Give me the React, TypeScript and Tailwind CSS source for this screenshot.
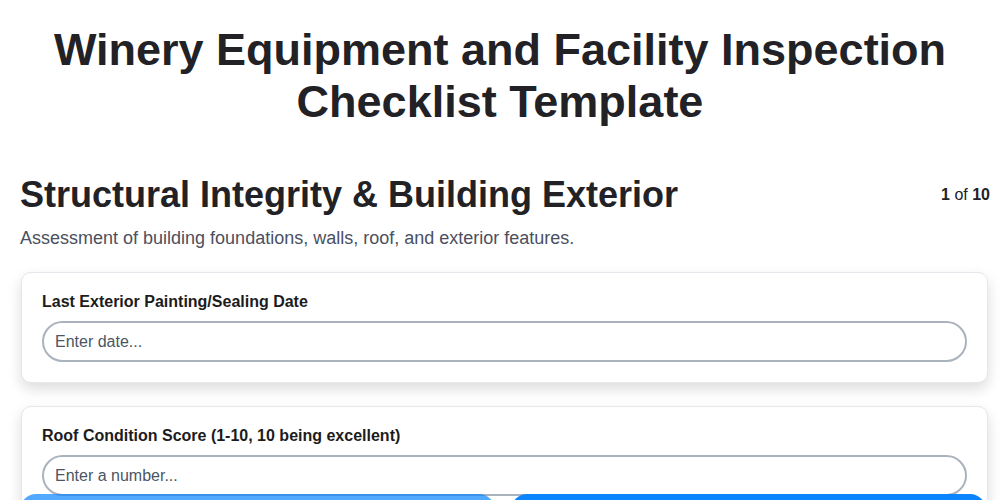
export default function App() {
  return (
    <div className="min-h-screen bg-white font-['Liberation_Sans',Arial,sans-serif] text-[#222226]">
      {/* Page title */}
      <h1 className="px-5 pt-6 text-center text-[45px] font-bold leading-[52px]">
        Winery Equipment and Facility Inspection
        <br />
        Checklist Template
      </h1>

      <div className="pl-5 pr-[10px]">
        {/* Section header */}
        <div className="mt-[45px] flex items-start justify-between">
          <h2 className="text-[36px] font-bold leading-[43px]">
            Structural Integrity &amp; Building Exterior
          </h2>
          <div className="pt-[12px] text-[16px] leading-5">
            <span className="font-bold">1</span> of <span className="font-bold">10</span>
          </div>
        </div>
        <p className="mt-[10px] text-[18px] leading-6 text-[#4b5060]">
          Assessment of building foundations, walls, roof, and exterior features.
        </p>

        {/* Questions */}
        <div className="mt-[22px] flex flex-col gap-[23px] pr-[2px] pl-px">
          <Field label="Last Exterior Painting/Sealing Date" placeholder="Enter date..." />
          <Field label="Roof Condition Score (1-10, 10 being excellent)" placeholder="Enter a number..." />
        </div>
      </div>

      {/* Footer buttons */}
      <div className="fixed inset-x-0 top-[494px] flex gap-4 pl-5 pr-[14px]">
        <button className="h-[72px] flex-1 rounded-2xl bg-[#0a84ff] text-[16px] font-bold text-white opacity-70">Previous</button>
        <button className="h-[72px] flex-1 rounded-2xl bg-[#0a84ff] text-[16px] font-bold text-white">Next</button>
      </div>
    </div>
  );
}

function Field({ label, placeholder }: { label: string; placeholder: string }) {
  return (
    <div className="rounded-[10px] border border-[#e6e6ec] bg-white px-5 pt-[19px] pb-5 shadow-[0_6px_14px_rgba(0,0,0,0.14)]">
      <label className="block text-[16px] font-bold leading-[19px] text-[#1c1c20]">{label}</label>
      <input
        className="mt-[10px] block h-[41px] w-full rounded-full border-2 border-[#aab2bd] px-[11px] text-[16px] text-[#222] outline-none placeholder:text-[#4b5563]"
        placeholder={placeholder}
      />
    </div>
  );
}
